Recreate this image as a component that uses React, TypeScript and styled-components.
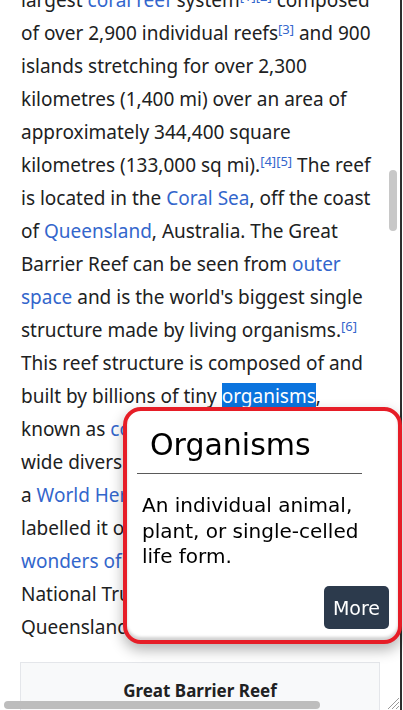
import React, { useLayoutEffect, useRef } from "react";
import styled, { createGlobalStyle } from "styled-components";

const GlobalStyle = createGlobalStyle`
  html, body {
    margin: 0;
    padding: 0;
    background: #ffffff;
    overflow: hidden;
  }
`;

const Viewport = styled.div`
  position: relative;
  width: 402px;
  height: 710px;
  box-sizing: border-box;
  border-right: 2px solid #2e2e2e;
  background: #ffffff;
`;

const Frame = styled.div`
  width: 100%;
  height: 100%;
  overflow: scroll;
  scrollbar-width: none;

  &::-webkit-scrollbar {
    display: none;
  }
`;

const Article = styled.article`
  width: 476px;
  box-sizing: border-box;
  padding: 0 0 40px 21px;
  font-family: "Noto Sans", "Open Sans", sans-serif;
  font-size: 19px;
  line-height: 33px;
  color: #202122;
`;

const Title = styled.h1`
  width: 350px;
  margin: 24px 0 12px;
  font-family: "Liberation Serif", serif;
  font-weight: normal;
  font-size: 32px;
  line-height: 40px;
  border-bottom: 1px solid #a2a9b1;
`;

const Toc = styled.nav`
  width: 350px;
  margin: 0 0 16px;
`;

const TocItem = styled.div`
  font-size: 17px;
  line-height: 30px;
  color: #3366cc;
`;

const Para = styled.p`
  width: 357px;
  margin: 0 0 18px;
`;

const Link = styled.span`
  color: #3366cc;
`;

const Ref = styled.sup`
  color: #3366cc;
  font-size: 13px;
  line-height: 1;
  vertical-align: 6px;
`;

const Mark = styled.span`
  background: #0b74de;
  color: #ffffff;
`;

const Infobox = styled.table`
  width: 360px;
  margin: 0 0 24px -1px;
  border: 1px solid #e4e6ea;
  background: #f8f9fa;
  border-collapse: collapse;
  font-size: 15px;
  line-height: 22px;
`;

const Caption = styled.th`
  padding: 17px 8px 8px;
  font-size: 17px;
  font-weight: bold;
  text-align: center;
  color: #202122;
`;

const Label = styled.th`
  width: 40%;
  padding: 6px 8px;
  text-align: left;
  vertical-align: top;
`;

const Value = styled.td`
  padding: 6px 8px;
`;

const SectionHead = styled.h2`
  width: 350px;
  margin: 24px 0 8px;
  font-family: "Liberation Serif", serif;
  font-weight: normal;
  font-size: 26px;
  line-height: 34px;
  border-bottom: 1px solid #a2a9b1;
`;

/* overlay scrollbars, drawn over the article like the browser's own */
const VThumb = styled.div`
  position: absolute;
  right: 3px;
  top: 170px;
  width: 8px;
  height: 61px;
  border-radius: 4px;
  background: #c8c8c8;
`;

const HThumb = styled.div`
  position: absolute;
  left: 4px;
  bottom: 1px;
  width: 316px;
  height: 8px;
  border-radius: 4px;
  background: #bdbdbd;
`;

const Grip = styled.svg`
  position: absolute;
  right: 0;
  bottom: 0;
  width: 17px;
  height: 17px;
`;

const Popup = styled.aside`
  position: fixed;
  left: 123px;
  top: 407px;
  width: 279px;
  height: 237px;
  box-sizing: border-box;
  border: 4px solid #e61d27;
  border-radius: 18px;
  background: #ffffff;
  box-shadow: 0 6px 14px rgba(0, 0, 0, 0.3), inset 0 -3px 3px rgba(0, 0, 0, 0.18);
  padding: 16px 9px 11px 10px;
  display: flex;
  flex-direction: column;
  font-family: "DejaVu Sans", "Noto Sans", sans-serif;
  color: #000000;
`;

const PopupTitle = styled.h3`
  margin: 0;
  padding-left: 13px;
  font-size: 30px;
  font-weight: normal;
  line-height: 36px;
`;

const Rule = styled.hr`
  width: 225px;
  margin: 10px 0 0;
  border: none;
  border-top: 1.5px solid #5a5a5a;
`;

const PopupText = styled.p`
  margin: 19px 0 0;
  padding-left: 5px;
  font-size: 20px;
  line-height: 25.5px;
`;

const Footer = styled.div`
  margin-top: auto;
  display: flex;
  justify-content: flex-end;
`;

const MoreButton = styled.button`
  width: 65px;
  height: 43px;
  padding: 0;
  border: none;
  border-radius: 5px;
  background: #2c3a4c;
  color: #ffffff;
  font-family: "DejaVu Sans", "Noto Sans", sans-serif;
  font-size: 19px;
  cursor: pointer;
`;

const tocEntries = [
  "Geology and geography", "Ecology", "Reef types", "Biodiversity", "Coral",
  "Fish", "Seabirds", "Reptiles", "Invertebrates", "Algae and seagrass",
  "Environmental threats", "Water quality", "Climate change", "Crown-of-thorns starfish",
  "Overfishing", "Shipping", "Oil", "Coral bleaching", "History", "Heritage listing",
  "Management", "Tourism", "Fishing", "Shipwrecks", "Indigenous sea country",
  "Research", "Naming", "See also", "References", "Further reading", "External links",
  "Gallery", "Notes", "Sources",
];

const infoRows: [string, string][] = [
  ["Location", "Coral Sea, Queensland, Australia"],
  ["Area", "344,400 km² (133,000 sq mi)"],
  ["Length", "2,300 km (1,400 mi)"],
  ["Reefs", "2,900"],
  ["Islands", "900"],
  ["Criteria", "Natural: vii, viii, ix, x"],
  ["Reference", "154"],
  ["Inscription", "1981 (5th Session)"],
];

const sectionText =
  "The reef is located in the Coral Sea, off the coast of Queensland in northeast Australia. It extends for more than 2,300 kilometres along the coast and covers a wide range of depths, from shallow lagoons and reef flats to the steep outer slopes that fall away into the deep ocean. Its structure is built from the calcium carbonate skeletons of countless coral polyps, laid down over many thousands of years, and the reef continues to change as sea levels rise and fall.";

export default function App() {
  const frameRef = useRef<HTMLDivElement>(null);
  const leadRef = useRef<HTMLParagraphElement>(null);

  useLayoutEffect(() => {
    const frame = frameRef.current;
    const lead = leadRef.current;
    if (frame && lead) {
      frame.scrollTop = lead.offsetTop - frame.offsetTop + 49;
      frame.scrollLeft = 0;
    }
  }, []);

  return (
    <>
      <GlobalStyle />
      <Viewport>
        <Frame ref={frameRef}>
          <Article>
            <Title>Great Barrier Reef</Title>
            <Toc>
              {tocEntries.map((entry, i) => (
                <TocItem key={entry}>
                  {i + 1} {entry}
                </TocItem>
              ))}
            </Toc>
            <Para ref={leadRef}>
              The <b>Great Barrier Reef</b> is the world's largest{" "}
              <Link>coral reef</Link> system<Ref>[1]</Ref>
              <Ref>[2]</Ref> composed of over 2,900 individual reefs
              <Ref>[3]</Ref> and 900 islands stretching for over 2,300
              kilometres (1,400 mi) over an area of approximately 344,400
              square kilometres (133,000 sq mi).<Ref>[4]</Ref>
              <Ref>[5]</Ref> The reef is located in the <Link>Coral Sea</Link>,
              off the coast of <Link>Queensland</Link>, Australia. The Great
              Barrier Reef can be seen from <Link>outer space</Link> and is the
              world's biggest single structure made by living organisms.
              <Ref>[6]</Ref> This reef structure is composed of and built by
              billions of tiny <Mark>organisms</Mark>, known as{" "}
              <Link>coral polyps</Link>. It supports a wide diversity of life
              and was chosen as a <Link>World Heritage Site</Link> in 1981.
              CNN labelled it one of the{" "}
              <Link>seven natural wonders of the world</Link>. The Queensland
              National Trust named it a state icon of Queensland.
            </Para>
            <Infobox>
              <thead>
                <tr>
                  <Caption colSpan={2}>Great Barrier Reef</Caption>
                </tr>
              </thead>
              <tbody>
                {infoRows.map(([label, value]) => (
                  <tr key={label}>
                    <Label>{label}</Label>
                    <Value>{value}</Value>
                  </tr>
                ))}
              </tbody>
            </Infobox>
            {tocEntries.slice(0, 14).map((entry) => (
              <section key={entry}>
                <SectionHead>{entry}</SectionHead>
                <Para>{sectionText}</Para>
              </section>
            ))}
          </Article>
        </Frame>
        <VThumb />
        <HThumb />
        <Grip viewBox="0 0 17 17">
          <path d="M16 5 L5 16 M16 9 L9 16 M16 13 L13 16" stroke="#9a9a9a" strokeWidth="1" />
        </Grip>
      </Viewport>
      <Popup>
        <PopupTitle>Organisms</PopupTitle>
        <Rule />
        <PopupText>An individual animal, plant, or single-celled life form.</PopupText>
        <Footer>
          <MoreButton>More</MoreButton>
        </Footer>
      </Popup>
    </>
  );
}
